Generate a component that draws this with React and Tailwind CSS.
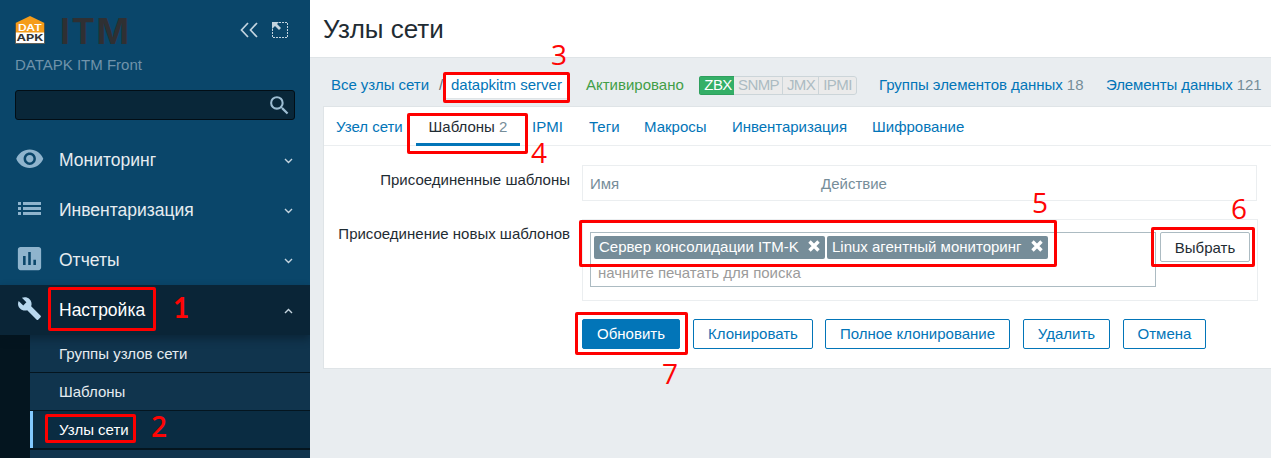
import React from "react";
import { MdVisibility, MdInsertChart, MdBuild, MdSearch } from "react-icons/md";

function ListIcon() {
  return (
    <svg width="23" height="13" viewBox="0 0 23 13" fill="currentColor" shapeRendering="crispEdges">
      <path d="M0 0h3v3H0zM5 0h18v3H5zM0 5h3v3H0zM5 5h18v3H5zM0 10h3v3H0zM5 10h18v3H5z" />
    </svg>
  );
}

function Chevron({ up }) {
  return (
    <svg width="9" height="6" viewBox="0 0 9 6" fill="none" stroke="currentColor" strokeWidth="1.4">
      <path d={up ? "M1 5 4.5 1.5 8 5" : "M1 1 4.5 4.5 8 1"} />
    </svg>
  );
}

function Logo() {
  return (
    <svg width="30" height="30" viewBox="0 0 30 30" className="shrink-0">
      <path d="M15 1 29.5 8v20.500H0.5V8z" fill="#f59c1a" />
      <path d="M0.500 17.500h29v11h-29z" fill="#fff" />
      <path d="M0.500 8v20.500h29V8" fill="none" stroke="#4a4a44" strokeWidth="0.8" />
      <text x="15" y="15.5" textAnchor="middle" textLength="24" lengthAdjust="spacingAndGlyphs" fontFamily="Inter, sans-serif" fontWeight="600" fontSize="8.5" fill="#fff">DAT</text>
      <text x="15" y="26" textAnchor="middle" textLength="27" lengthAdjust="spacingAndGlyphs" fontFamily="Inter, sans-serif" fontWeight="700" fontSize="9.5" fill="#333">APK</text>
    </svg>
  );
}

const menu = [
  { label: "Мониторинг", icon: <MdVisibility size={29.5} /> },
  { label: "Инвентаризация", icon: <ListIcon /> },
  { label: "Отчеты", icon: <MdInsertChart size={31} /> },
];

function MenuRow({ label, icon, active }) {
  return (
    <div className={active ? "relative z-10 flex h-[50px] items-center bg-[#0a2537] pr-[17px] text-white shadow-[0_4px_8px_rgba(4,20,31,0.45)]" : "flex h-[50px] items-center pr-[17px] text-[#e6ecf0]"}>
      <span className={active ? "mb-[3px] flex w-[59px] justify-center text-[#b9d8ee]" : "mb-[3px] flex w-[59px] justify-center text-[#8fb4cd]"}>
        {icon}
      </span>
      <span className="flex-1 text-[17.5px] leading-[22px]">{label}</span>
      <span className="mt-[2px] text-[#c5d5e0]"><Chevron up={active} /></span>
    </div>
  );
}

function Sidebar() {
  return (
    <aside className="flex h-[458px] w-[310px] shrink-0 flex-col overflow-hidden bg-[#0a466a]">
      <div className="flex h-[55px] shrink-0 items-start pl-[15px] pt-[15px]">
        <Logo />
        <span className="-mt-[4px] ml-[15px] w-[180px] font-[Inter] text-[35px] font-bold leading-[40px] tracking-[1.6px] text-[#2f3033]">ITM</span>
        <svg width="18" height="16" viewBox="0 0 18 16" className="mt-[7px] shrink-0" fill="none" stroke="#c3d4df" strokeWidth="1.7">
          <path d="M8 1 1.5 8 8 15M17 1 10.500 8l6.500 7" />
        </svg>
        <svg width="16" height="16" viewBox="0 0 16 16" className="ml-[14px] mt-[7px] shrink-0">
          <path d="M7 .5H15.500V15.500H.5V7" fill="none" stroke="#c3d4df" strokeDasharray="2 1" />
          <path d="M0 0h7L5 2l4 4-2 2-4-4-3 3z" fill="#c3d4df" />
        </svg>
      </div>
      <div className="h-[35px] shrink-0 pl-[15px] text-[15px] leading-[20px] text-[#7093ab]">DATAPK ITM Front</div>
      <div className="mx-[15px] flex h-[30px] shrink-0 items-center justify-end rounded-[3px] border border-[#020e16] bg-[#092739] pr-[2px] text-[#9dbdd2]">
        <MdSearch size={25} />
      </div>
      <nav className="mt-[15px] flex flex-col">
        {menu.map((m) => <MenuRow key={m.label} {...m} />)}
        <MenuRow label="Настройка" icon={<MdBuild size={25} />} active />
        <div className="flex h-[123px] flex-col bg-[#04151f] pl-[30px] text-[15px] leading-[37px] text-[#e6ecf0]">
          <div className="mb-[1px] h-[37px] bg-[#10344d] pl-[29px]">Группы узлов сети</div>
          <div className="mb-[1px] h-[37px] bg-[#10344d] pl-[29px]">Шаблоны</div>
          <div className="mb-[2px] h-[37px] border-l-[3px] border-[#82caff] bg-[#0a2c42] pl-[26px] text-white">Узлы сети</div>
          <div className="h-[8px] bg-[#10344d]" />
        </div>
      </nav>
    </aside>
  );
}

function Breadcrumbs() {
  return (
    <div className="flex h-[48px] items-start whitespace-nowrap pt-[18px] text-[15px] leading-[17px] text-[#0275b8]">
      <span className="ml-[21px] w-[108px] tracking-[-0.04px]">Все узлы сети</span>
      <span className="w-[4px] text-[#5d6d7a]">/</span>
      <span className="-mt-[4px] h-[27px] w-[127px] border-b border-[#dfe4e7] bg-white pl-[8px] pt-[4px]">datapkitm server</span>
      <span className="ml-[16px] w-[113px] text-[#429e47]">Активировано</span>
      <div className="flex h-[19px] w-[158px] shrink-0 overflow-hidden rounded-[3px] leading-[17px] text-[#acbbc2] [&>span]:border-y [&>span]:text-center">
        <span className="w-[35px] border-l border-[#2f9f5e] bg-[#34af67] pl-[2px] leading-[16px] tracking-[-0.6px] text-white">ZBX</span>
        <span className="w-[49px] border-r border-[#ccd5d9] bg-[#ebebeb] pl-[1px] leading-[16px] tracking-[-0.6px]">SNMP</span>
        <span className="w-[36px] border-r border-[#ccd5d9] bg-[#ebebeb] pl-[1px] leading-[16px] tracking-[-0.6px]">JMX</span>
        <span className="w-[38px] rounded-r-[3px] border-r border-[#ccd5d9] bg-[#ebebeb] leading-[16px] tracking-[-0.6px]">IPMI</span>
      </div>
      <span className="ml-[22px] w-[227px] shrink-0 tracking-[-0.04px]">Группы элементов данных <span className="text-[#768d99]">18</span></span>
      <span className="shrink-0 tracking-[-0.1px]">Элементы данных <span className="text-[#768d99]">121</span></span>
    </div>
  );
}

function Tabs() {
  return (
    <div className="flex h-[39px] border-b border-[#ebeef0] whitespace-nowrap text-[15px] leading-[40px] text-[#0275b8]">
      <span className="w-[92px] pl-[12px]">Узел сети</span>
      <span className="h-[39px] w-[104px] border-b-[3px] border-[#0275b8] text-center text-[#1f2c33]">Шаблоны <span className="text-[#768d99]">2</span></span>
      <span className="w-[56px] pl-[12px]">IPMI</span>
      <span className="w-[56px] pl-[13px]">Теги</span>
      <span className="w-[88px] pl-[12px]">Макросы</span>
      <span className="w-[140px] pl-[12px] tracking-[-0.04px]">Инвентаризация</span>
      <span className="pl-[12px]">Шифрование</span>
    </div>
  );
}

function Tag({ children, className }) {
  return (
    <span className={`flex h-[23px] items-center justify-between rounded-[2px] bg-[#768d99] pb-[2px] pl-[5px] pr-[5px] text-white ${className}`}>
      {children}
      <svg width="12" height="12" viewBox="0 0 12 12" stroke="#fff" strokeWidth="3.400" className="-mt-[1px]">
        <path d="M1.500 1.500l9 9M10.500 1.500l-9 9" />
      </svg>
    </span>
  );
}

function Form() {
  return (
    <div className="pt-[19px] text-[15px] leading-[19px] text-[#1f2c33]">
      <div className="flex">
        <div className="w-[246px] pt-[5px] text-right">Присоединенные шаблоны</div>
        <div className="ml-[12px] flex h-[36px] w-[675px] items-center border border-[#ebeef0] pl-[7px] text-[#768d99]">
          <span className="w-[231px]">Имя</span>
          <span>Действие</span>
        </div>
      </div>
      <div className="mt-[18px] flex">
        <div className="w-[246px] pt-[5px] text-right">Присоединение новых шаблонов</div>
        <div className="ml-[12px] flex h-[82px] w-[676px] items-start border border-[#ebeef0] pl-[7px] pt-[12px]">
          <div className="h-[55px] w-[566px] border border-[#acbbc2] pl-[3px] pt-[3px]">
            <div className="flex gap-[2px] whitespace-nowrap">
              <Tag className="w-[231px]">Сервер консолидации ITM-K</Tag>
              <Tag className="w-[221px]">Linux агентный мониторинг</Tag>
            </div>
            <div className="pl-[4px] pt-[4px] text-[#9b9b9b]">начните печатать для поиска</div>
          </div>
          <div className="ml-[4px] h-[30px] w-[90px] rounded-[2px] border border-[#acbbc2] pt-[5px] text-center">Выбрать</div>
        </div>
      </div>
      <div className="ml-[258px] mt-[18px] flex whitespace-nowrap text-center leading-[28px] text-[#0275b8] [&>div]:h-[30px] [&>div]:rounded-[2px] [&>div]:border [&>div]:border-[#0275b8]">
        <div className="mr-[13px] w-[98px] bg-[#0275b8] text-white">Обновить</div>
        <div className="mr-[12px] w-[120px]">Клонировать</div>
        <div className="mr-[13px] w-[185px]">Полное клонирование</div>
        <div className="mr-[13px] w-[87px]">Удалить</div>
        <div className="w-[83px]">Отмена</div>
      </div>
    </div>
  );
}

function Marks() {
  return (
    <div className="pointer-events-none absolute inset-0 z-20 font-['Open_Sans'] text-[28px] leading-[28px] text-[#fe0505] [&>i]:absolute [&>i]:rounded-[2px] [&>i]:border-[3px] [&>i]:border-[#fe0000] [&>span]:absolute">
      <i className="left-[48px] top-[287px] h-[44px] w-[108px]" />
      <i className="left-[45px] top-[414px] h-[29px] w-[91px]" />
      <i className="left-[443px] top-[72px] h-[31px] w-[127px]" />
      <i className="left-[407px] top-[113px] h-[41px] w-[121px]" />
      <i className="left-[579px] top-[220px] h-[47px] w-[478px]" />
      <i className="left-[1151px] top-[227px] h-[40px] w-[104px]" />
      <i className="left-[575px] top-[312px] h-[43px] w-[113px]" />
      <span className="left-[173px] top-[293px] font-[Lato] font-bold">1</span>
      <span className="left-[151px] top-[412px] font-semibold">2</span>
      <span className="left-[551px] top-[40px]">3</span>
      <span className="left-[531px] top-[138px]">4</span>
      <span className="left-[1032px] top-[188px]">5</span>
      <span className="left-[1231px] top-[194px]">6</span>
      <span className="left-[662px] top-[359px]">7</span>
    </div>
  );
}

export default function App() {
  return (
    <div className="relative flex h-[458px] w-[1271px] overflow-hidden font-['Liberation_Sans',Arial,sans-serif]">
      <Sidebar />
      <main className="flex min-w-0 flex-1 flex-col overflow-hidden bg-[#e9edf0]">
        <h1 className="h-[58px] shrink-0 border-b border-[#dfe4e7] bg-white pl-[13px] pt-[14px] text-[26px] leading-[30px] text-[#1f2c33]">Узлы сети</h1>
        <Breadcrumbs />
        <div className="ml-[13px] h-[263px] w-[960px] border border-[#dfe4e7] bg-white">
          <Tabs />
          <Form />
        </div>
      </main>
      <Marks />
    </div>
  );
}
